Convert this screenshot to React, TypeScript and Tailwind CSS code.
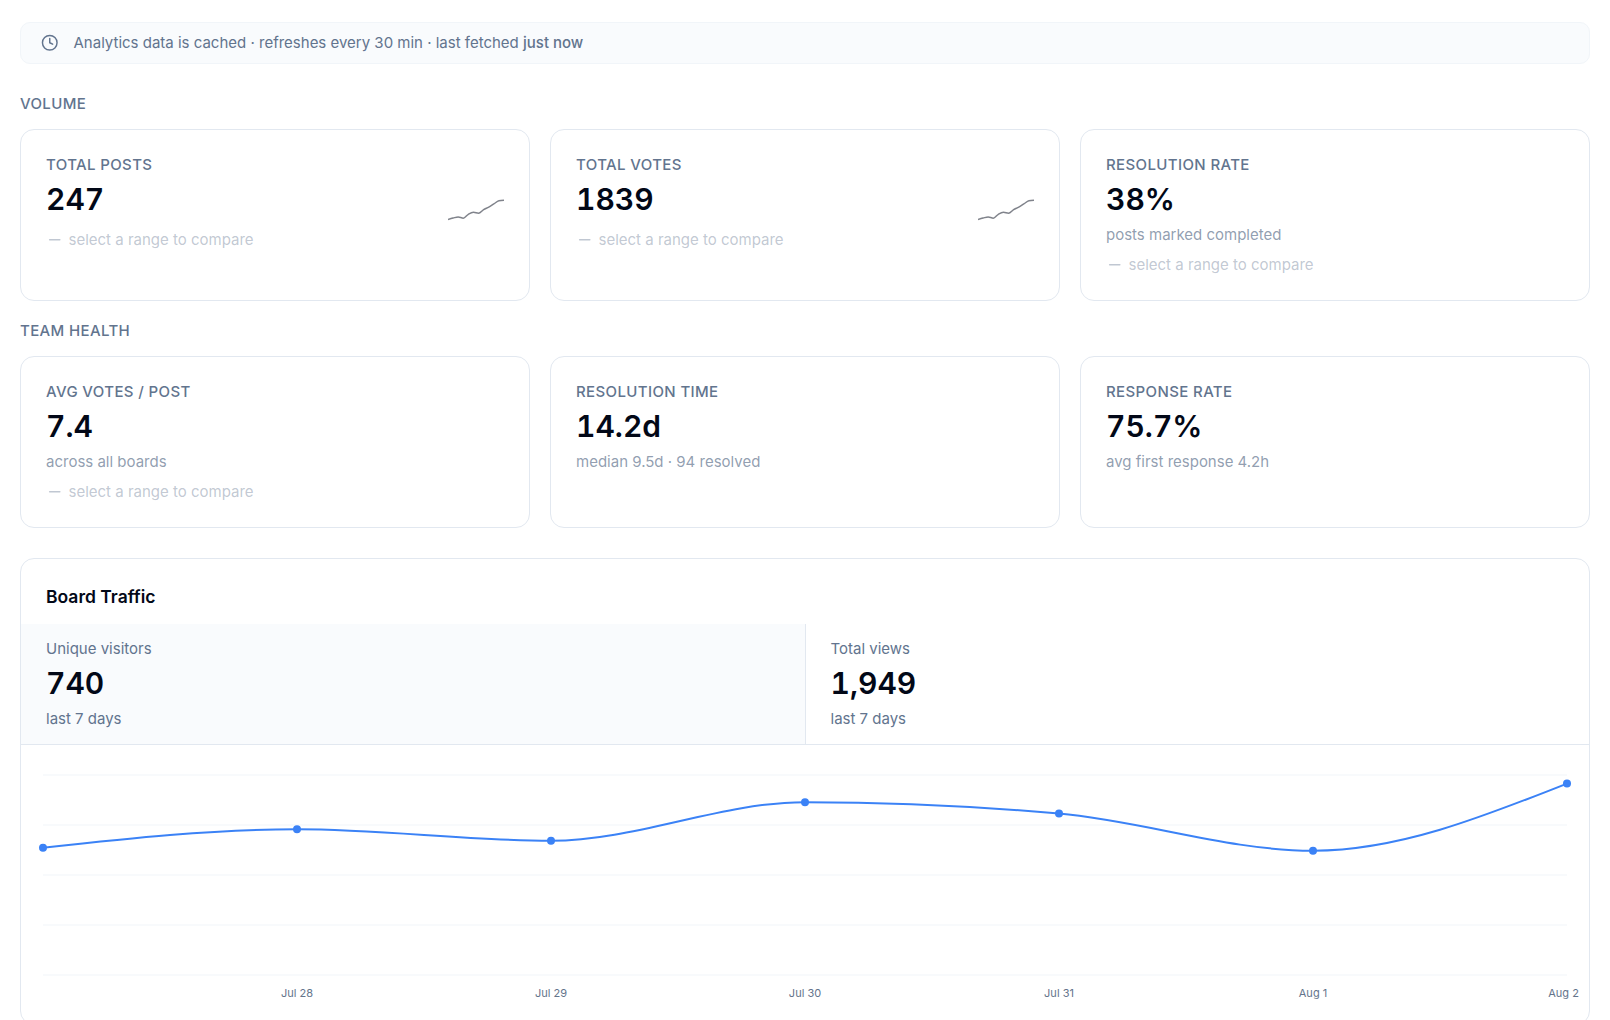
import { Clock, Minus } from "lucide-react";

interface StatCardProps {
  label: string;
  value: string;
  hint?: string;
  compare?: boolean;
  trend?: number[];
}

// y offsets inside the 56x24 sparkline box
const TREND = [21.5, 20.1, 18.9, 20.2, 16.3, 14.3, 15.2, 11.6, 9.1, 5.9, 2.8, 2.3];

const VOLUME: StatCardProps[] = [
  { label: "Total posts", value: "247", compare: true, trend: TREND },
  { label: "Total votes", value: "1839", compare: true, trend: TREND },
  { label: "Resolution rate", value: "38%", hint: "posts marked completed", compare: true },
];

const TEAM_HEALTH: StatCardProps[] = [
  { label: "Avg votes / post", value: "7.4", hint: "across all boards", compare: true },
  { label: "Resolution time", value: "14.2d", hint: "median 9.5d · 94 resolved" },
  { label: "Response rate", value: "75.7%", hint: "avg first response 4.2h" },
];

const TRAFFIC = [
  { day: "", visitors: 89 },
  { day: "Jul 28", visitors: 102 },
  { day: "Jul 29", visitors: 94 },
  { day: "Jul 30", visitors: 121 },
  { day: "Jul 31", visitors: 113 },
  { day: "Aug 1", visitors: 87 },
  { day: "Aug 2", visitors: 134 },
];

type Point = [number, number];

// monotone cubic interpolation, x spacing is constant
function monotonePath(points: Point[]) {
  const n = points.length;
  const h = points[1][0] - points[0][0];
  const slopes = points.slice(1).map((p, i) => (p[1] - points[i][1]) / h);
  const t: number[] = new Array(n).fill(0);
  for (let i = 1; i < n - 1; i++) {
    const a = slopes[i - 1];
    const b = slopes[i];
    t[i] =
      (Math.sign(a) + Math.sign(b)) *
      Math.min(Math.abs(a), Math.abs(b), 0.5 * Math.abs((a + b) / 2));
  }
  t[0] = (3 * slopes[0] - t[1]) / 2;
  t[n - 1] = (3 * slopes[n - 2] - t[n - 2]) / 2;

  let d = `M${points[0][0]},${points[0][1]}`;
  for (let i = 1; i < n; i++) {
    const [x0, y0] = points[i - 1];
    const [x1, y1] = points[i];
    d += `C${x0 + h / 3},${y0 + (t[i - 1] * h) / 3},${x1 - h / 3},${y1 - (t[i] * h) / 3},${x1},${y1}`;
  }
  return d;
}

function Sparkline({ data }: { data: number[] }) {
  const points = data.map((y, i): Point => [(i * 56) / (data.length - 1), y]);
  return (
    <svg width="56" height="24" viewBox="0 0 56 24" fill="none" className="shrink-0 text-[#020817]">
      <path d={monotonePath(points)} stroke="currentColor" strokeOpacity="0.5" strokeWidth="1.5" />
    </svg>
  );
}

function StatCard({ label, value, hint, compare, trend }: StatCardProps) {
  return (
    <div className="h-[172px] rounded-[14px] border border-slate-200 bg-white px-[25px] pt-[25px]">
      <p className="text-[15px] leading-5 font-medium tracking-[0.025em] text-slate-500 uppercase">
        {label}
      </p>
      <div className="flex items-start justify-between">
        <div>
          <p className="mt-1 text-[30px] leading-[40px] font-semibold tabular-nums">{value}</p>
          {hint && <p className="mt-1.5 text-[15px] leading-5 text-slate-500/70">{hint}</p>}
          {compare && (
            <p
              className={
                hint
                  ? "mt-[10px] flex items-center gap-[5px] text-[15px] leading-5 text-slate-500/40"
                  : "mt-[11px] flex items-center gap-[5px] text-[15px] leading-5 text-slate-500/40"
              }
            >
              <Minus size={17.5} className="mb-px" />
              <span>select a range to compare</span>
            </p>
          )}
        </div>
        {trend && (
          <div className="mt-[23px]">
            <Sparkline data={trend} />
          </div>
        )}
      </div>
    </div>
  );
}

function StatSection({ title, stats }: { title: string; stats: StatCardProps[] }) {
  return (
    <section>
      <h2 className="text-[15px] leading-5 font-medium tracking-[0.025em] text-slate-500 uppercase">
        {title}
      </h2>
      <div className="mt-[15px] grid grid-cols-3 gap-5">
        {stats.map((stat) => (
          <StatCard key={stat.label} {...stat} />
        ))}
      </div>
    </section>
  );
}

function TrafficTab({ label, value, active }: { label: string; value: string; active?: boolean }) {
  return (
    <div
      className={
        active
          ? "h-[120px] bg-[#f9fbfd] px-[25px] pt-[15px]"
          : "h-[120px] border-l border-slate-200 px-[24.5px] pt-[15px]"
      }
    >
      <p className="text-[15px] leading-5 text-slate-500">{label}</p>
      <p className="mt-1 text-[30px] leading-[40px] font-semibold tabular-nums">{value}</p>
      <p className="mt-1.5 text-[15px] leading-5 text-slate-500">last 7 days</p>
    </div>
  );
}

function TrafficChart() {
  const points = TRAFFIC.map((d, i): Point => [22 + i * 254, 230 - (d.visitors * 200) / 140]);
  return (
    <svg width="1568" height="279" viewBox="0 0 1568 279" className="block">
      {[30, 80, 130, 180, 230].map((y) => (
        <line key={y} x1="22" x2="1546" y1={y} y2={y} stroke="#f1f5f9" />
      ))}
      <path d={monotonePath(points)} fill="none" stroke="#3b82f6" strokeWidth="2" />
      {points.map(([x, y]) => (
        <circle key={x} cx={x} cy={y} r="4" fill="#3b82f6" />
      ))}
      {TRAFFIC.map((d, i) => (
        <text
          key={i}
          x={i === TRAFFIC.length - 1 ? 1542.6 : points[i][0]}
          y="252"
          textAnchor="middle"
          fontSize="11"
          fill="#64748b"
        >
          {d.day}
        </text>
      ))}
    </svg>
  );
}

export default function App() {
  return (
    <main className="h-[1020px] overflow-hidden bg-white px-5 pt-[22px] font-['Inter',sans-serif] text-[#020817]">
      <div className="flex h-[42px] items-center gap-[15px] rounded-[10px] border border-slate-100 bg-[#f9fbfd] px-5 text-[15px] leading-5 text-slate-500">
        <Clock size={17.5} />
        <p>
          Analytics data is cached · refreshes every 30 min · last fetched{" "}
          <span className="font-medium">just now</span>
        </p>
      </div>

      <div className="mt-[30px] flex flex-col gap-5">
        <StatSection title="Volume" stats={VOLUME} />
        <StatSection title="Team health" stats={TEAM_HEALTH} />
      </div>

      <section className="mt-[30px] overflow-hidden rounded-[14px] border border-slate-200 bg-white">
        <h2 className="px-[25px] pt-[26px] pb-[15px] text-[17.5px] leading-6 font-semibold">
          Board Traffic
        </h2>
        <div className="grid grid-cols-2 border-b border-slate-200">
          <TrafficTab label="Unique visitors" value="740" active />
          <TrafficTab label="Total views" value="1,949" />
        </div>
        <TrafficChart />
      </section>
    </main>
  );
}
